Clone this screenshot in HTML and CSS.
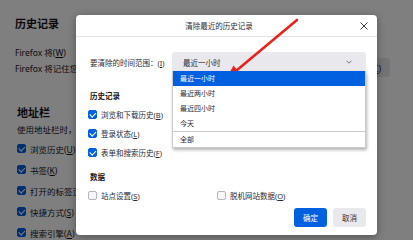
FILE: index.html
```html
<!DOCTYPE html>
<html lang="zh-CN">
<head>
<meta charset="utf-8">
<title>清除最近的历史记录</title>
<link rel="stylesheet" href="styles.css">
</head>
<body>
<div class="page">
  <h2 class="bg-h">历史记录</h2>
  <div class="bg-line">Firefox 将(<u>W</u>)</div>
  <div class="bg-row"><span>Firefox 将记住您的浏览、下载、表单和搜索历史。</span><span class="bg-btn"><span>清除历史(<u>C</u>)</span></span></div>
  <h2 class="bg-h addr">地址栏</h2>
  <div class="bg-sub">使用地址栏时，建议：</div>
  <div class="bg-list">
    <div class="bg-check"><span class="cb on"></span><span>浏览历史(<u>U</u>)</span></div>
    <div class="bg-check"><span class="cb on"></span><span>书签(<u>K</u>)</span></div>
    <div class="bg-check"><span class="cb on"></span><span>打开的标签页(<u>O</u>)</span></div>
    <div class="bg-check"><span class="cb on"></span><span>快捷方式(<u>S</u>)</span></div>
    <div class="bg-check"><span class="cb on"></span><span>搜索引擎(<u>A</u>)</span></div>
  </div>
</div>
<div class="overlay"></div>
<div class="dialog">
  <div class="dlg-head">
    <div class="dlg-title">清除最近的历史记录</div>
    <div class="dlg-close"><svg width="8" height="8" viewBox="0 0 8 8"><path d="M0.5 0.5L7.5 7.5M7.5 0.5L0.5 7.5" stroke="#3a3944" stroke-width="1" fill="none"/></svg></div>
  </div>
  <div class="dlg-body">
    <div class="range-row">
      <span>要清除的时间范围：(<u>I</u>)</span>
      <div class="select">
        <span>最近一小时</span>
        <svg width="6" height="4" viewBox="0 0 6 4"><path d="M0.5 0.7L3 3.2L5.5 0.7" stroke="#6a6a74" stroke-width="0.9" fill="none"/></svg>
        <div class="menu">
          <div class="item sel">最近一小时</div>
          <div class="item">最近两小时</div>
          <div class="item">最近四小时</div>
          <div class="item">今天</div>
          <div class="sep"></div>
          <div class="item">全部</div>
        </div>
      </div>
    </div>
    <h3 class="dh first">历史记录</h3>
    <div class="checks">
      <div class="ck"><span class="cb on"></span><span>浏览和下载历史(<u>B</u>)</span></div>
      <div class="ck"><span class="cb on"></span><span>登录状态(<u>L</u>)</span></div>
      <div class="ck"><span class="cb on"></span><span>表单和搜索历史(<u>F</u>)</span></div>
    </div>
    <h3 class="dh data">数据</h3>
    <div class="data-row">
      <div class="ck"><span class="cb"></span><span>站点设置(<u>S</u>)</span></div>
      <div class="ck"><span class="cb"></span><span>脱机网站数据(<u>O</u>)</span></div>
    </div>
    <div class="btns">
      <span class="btn primary">确定</span>
      <span class="btn">取消</span>
    </div>
  </div>
</div>
<svg class="arrow" width="413" height="240" viewBox="0 0 413 240">
  <path d="M297 20 L236.5 70.5" stroke="#e8231d" stroke-width="2.6" stroke-linecap="round" fill="none"/>
  <polygon points="226,79 233.5,65.5 240.5,74" fill="#e8231d"/>
</svg>
</body>
</html>
```
FILE: styles.css
```css
* { box-sizing: border-box; margin: 0; padding: 0; }
html, body { width: 413px; height: 240px; overflow: hidden; }
body {
  font-family: "Noto Sans", "Noto Sans CJK SC", sans-serif;
  color: #15141a;
  background: #fff;
  position: relative;
}
u { text-decoration: underline; text-underline-offset: 1px; text-decoration-thickness: 0.5px; }

/* background preferences page */
.page { padding: 17px 23px 0 15px; font-size: 8.5px; }
.bg-h { font-size: 11px; font-weight: 700; line-height: 14px; }
.bg-h.addr { margin-top: 29px; padding-left: 2px; }
.bg-line { line-height: 12px; margin-top: 16px; }
.bg-row {
  display: flex; justify-content: space-between; align-items: center;
  height: 19px; margin-top: -1px; white-space: nowrap;
}
.bg-btn {
  background: #e9e9ed; border-radius: 3px; height: 19px;
  padding: 0 9px; display: flex; align-items: center;
}
.bg-sub { margin-top: 4px; line-height: 12px; padding-left: 2px; }
.bg-list { margin-top: 2px; display: flex; flex-direction: column; }
.bg-check { height: 21px; display: flex; align-items: center; gap: 4px; padding-left: 2px; }
.overlay { position: absolute; inset: 0; background: rgba(0, 0, 0, 0.5); }

/* checkboxes */
.cb {
  width: 9px; height: 9px; border-radius: 2px; flex: none; position: relative;
  border: 1px solid #b5b5bd; background: #f6f6f8;
}
.cb.on { background: #0061e0; border-color: #0061e0; }
.cb.on::after {
  content: ""; position: absolute; left: 2.3px; top: 0.4px;
  width: 2.6px; height: 4.8px;
  border: solid #fff; border-width: 0 1.3px 1.3px 0;
  transform: rotate(45deg);
}

/* dialog */
.dialog {
  position: absolute; left: 76px; top: 15px; width: 301px; height: 220px;
  background: #fff; border-radius: 4px;
  box-shadow: 0 2px 8px rgba(0, 0, 0, 0.35);
  font-size: 7.5px; color: #2b2a33;
}
.dlg-head {
  height: 22px; border-bottom: 1px solid #e3e3e8;
  display: flex; align-items: center; padding: 0 6px 0 5px;
}
.dlg-title { flex: 1; text-align: center; }
.dlg-close { width: 14px; height: 14px; display: flex; align-items: center; justify-content: center; }
.dlg-body { padding: 0 11px 0 14px; }
.range-row { display: flex; align-items: center; justify-content: space-between; margin-top: 15px; }
.select {
  width: 194px; height: 20px; background: #e9e9ed; border-radius: 3px;
  display: flex; align-items: center; justify-content: space-between;
  padding: 0 14px 0 11px; position: relative;
}
.menu {
  position: absolute; left: 0; top: 19px; width: 194px;
  background: #fff; border: 1px solid #c9c9cf; border-top: 0;
  box-shadow: 1px 2px 3px rgba(0, 0, 0, 0.3);
  font-size: 7px; z-index: 2;
}
.item { height: 15px; line-height: 15px; padding-left: 7px; }
.item.sel { background: #0060df; color: #fff; }
.sep { height: 1px; background: #c9c9cf; }

.dh { font-size: 7.5px; font-weight: 700; line-height: 12px; color: #15141a; }
.dh.first { margin-top: 18px; }
.dh.data { margin-top: 9px; }
.checks { margin-top: 3px; }
.ck { height: 19px; display: flex; align-items: center; gap: 4px; margin-left: -2px; white-space: nowrap; }
.data-row { display: grid; grid-template-columns: 129px 1fr; margin-top: 3px; }
.btns { display: flex; justify-content: flex-end; gap: 6px; margin-top: 3px; }
.btn {
  width: 33px; height: 19px; border-radius: 3px; background: #e9e9ed;
  display: flex; align-items: center; justify-content: center;
}
.btn.primary { background: #0061e0; color: #fff; }

.arrow { position: absolute; left: 0; top: 0; pointer-events: none; }
```
